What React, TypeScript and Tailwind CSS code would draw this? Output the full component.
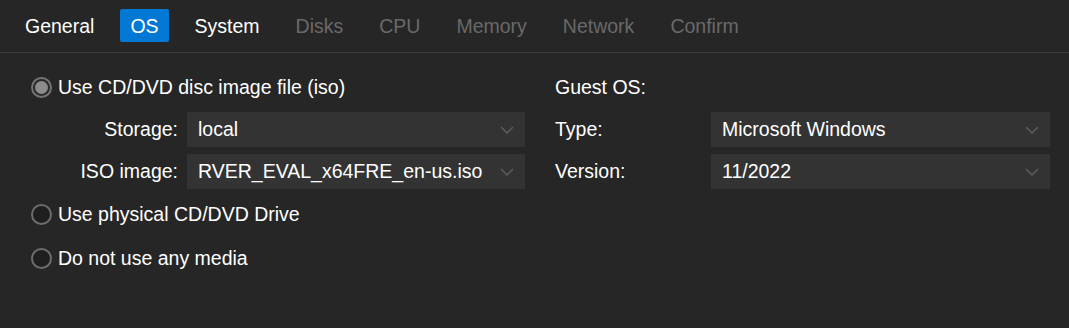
import React from "react";

const font = { fontFamily: '"Liberation Sans", Arial, sans-serif' };

function Chevron() {
  return (
    <svg width="14" height="8" viewBox="0 0 14 8" className="shrink-0">
      <path d="M1 1 L7 7 L13 1" fill="none" stroke="#5c5c5c" strokeWidth="1.5" />
    </svg>
  );
}

function Field({ value }: { value: string }) {
  return (
    <div className="flex h-[35px] flex-1 items-center justify-between overflow-hidden bg-[#333333] pl-[11px] pr-[11px]">
      <span className="whitespace-nowrap text-white">{value}</span>
      <Chevron />
    </div>
  );
}

function Radio({ checked, label }: { checked?: boolean; label: string }) {
  return (
    <div className="flex h-[35px] items-center gap-[6px]">
      <div
        className={
          checked
            ? "flex h-[21px] w-[21px] items-center justify-center rounded-full border-2 border-[#747474] bg-[#2a2a2a]"
            : "flex h-[21px] w-[21px] items-center justify-center rounded-full border-2 border-[#6c6c6c] bg-[#1f1f1f]"
        }
      >
        {checked && <div className="h-[13px] w-[13px] rounded-full bg-[#8c8c8c]" />}
      </div>
      <span className="text-white">{label}</span>
    </div>
  );
}

export default function App() {
  const tabs = [
    { name: "General", state: "normal" },
    { name: "OS", state: "active" },
    { name: "System", state: "normal" },
    { name: "Disks", state: "disabled" },
    { name: "CPU", state: "disabled" },
    { name: "Memory", state: "disabled" },
    { name: "Network", state: "disabled" },
    { name: "Confirm", state: "disabled" },
  ];
  return (
    <div className="h-[328px] w-[1069px] bg-[#262626] text-[19.5px] leading-none" style={font}>
      <div className="flex h-[53px] items-start gap-[16px] border-b border-[#3d3d3d] pl-[15px] pt-[9px]">
        {tabs.map((t) => (
          <div
            key={t.name}
            className={
              t.state === "active"
                ? "flex h-[33px] items-center rounded-[2px] bg-[#0078d4] px-[10px] pt-[2px] text-white"
                : t.state === "normal"
                ? "flex h-[33px] items-center px-[10px] pt-[2px] text-white"
                : "flex h-[33px] items-center px-[10px] pt-[2px] text-[#696969]"
            }
          >
            {t.name}
          </div>
        ))}
      </div>
      <div className="flex gap-[30px] pl-[31px] pt-[17px]">
        <div className="flex w-[494px] flex-col">
          <Radio checked label="Use CD/DVD disc image file (iso)" />
          <div className="mt-[7px] flex items-center">
            <div className="w-[156px] pr-[9px] text-right text-white">Storage:</div>
            <Field value="local" />
          </div>
          <div className="mt-[7px] flex items-center">
            <div className="w-[156px] pr-[9px] text-right text-white">ISO image:</div>
            <Field value="RVER_EVAL_x64FRE_en-us.iso" />
          </div>
          <div className="mt-[8px]">
            <Radio label="Use physical CD/DVD Drive" />
          </div>
          <div className="mt-[9px]">
            <Radio label="Do not use any media" />
          </div>
        </div>
        <div className="flex w-[495px] flex-col">
          <div className="flex h-[35px] items-center text-white">Guest OS:</div>
          <div className="mt-[7px] flex items-center">
            <div className="w-[156px] text-white">Type:</div>
            <Field value="Microsoft Windows" />
          </div>
          <div className="mt-[7px] flex items-center">
            <div className="w-[156px] text-white">Version:</div>
            <Field value="11/2022" />
          </div>
        </div>
      </div>
    </div>
  );
}
